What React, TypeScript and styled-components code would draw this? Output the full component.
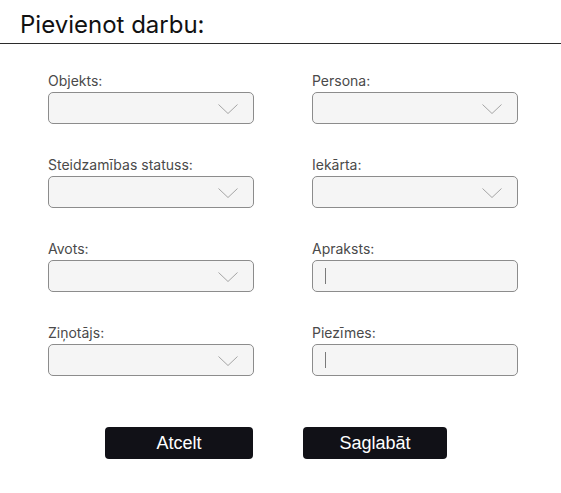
import React from 'react'
import styled, { createGlobalStyle } from 'styled-components'

const GlobalStyle = createGlobalStyle`
	html, body {
		margin: 0;
		padding: 0;
		background: #ffffff;
	}
	body {
		font-family: Inter, "Noto Sans", sans-serif;
	}
`

const Page = styled.div`
	width: 561px;
	min-height: 493px;
	background: #ffffff;
`

const Header = styled.div`
	padding: 10px 0 4px 20px;
	border-bottom: solid 1px #2b2b2b;
`

const Title = styled.h1`
	margin: 0;
	font-size: 24px;
	line-height: 29px;
	font-weight: 400;
	color: #111111;
`

const FormGrid = styled.div`
	display: grid;
	grid-template-columns: 206px 206px;
	column-gap: 58px;
	row-gap: 32px;
	padding: 28px 0 0 48px;
`

const Field = styled.div`
	display: flex;
	flex-direction: column;
	gap: 3px;
`

const Label = styled.label`
	font-size: 14px;
	line-height: 17px;
	font-weight: 400;
	color: #4a4a4a;
`

const Box = styled.div`
	position: relative;
	box-sizing: border-box;
	height: 32px;
	background: #f5f5f5;
	border: solid 1px #8c8c8c;
	border-radius: 5px;
	display: flex;
	align-items: center;
`

const Chevron = styled.svg`
	position: absolute;
	right: 15px;
	top: 11px;
`

const Caret = styled.span`
	display: block;
	width: 1px;
	height: 16px;
	margin-left: 12px;
	background: #7a7a7a;
`

const Actions = styled.div`
	display: flex;
	gap: 50px;
	padding: 51px 0 0 105px;
`

const Button = styled.button<{ w: number }>`
	width: ${({ w }) => w}px;
	height: 32px;
	border: none;
	border-radius: 4px;
	background: #111117;
	color: #ffffff;
	font-family: "Liberation Sans", Arial, sans-serif;
	font-size: 18px;
	font-weight: 400;
	padding: 0;
	cursor: pointer;
`

const SelectBox = () => (
	<Box>
		<Chevron width="20" height="10" viewBox="0 0 20 10">
			<path d="M0.5 0.5 L10 9.5 L19.5 0.5" fill="none" stroke="#8f8f8f" strokeWidth="0.8" />
		</Chevron>
	</Box>
)

const InputBox = () => (
	<Box>
		<Caret />
	</Box>
)

const fields = [
	{ label: 'Objekts:', kind: 'select' },
	{ label: 'Persona:', kind: 'select' },
	{ label: 'Steidzamības statuss:', kind: 'select' },
	{ label: 'Iekārta:', kind: 'select' },
	{ label: 'Avots:', kind: 'select' },
	{ label: 'Apraksts:', kind: 'input' },
	{ label: 'Ziņotājs:', kind: 'select' },
	{ label: 'Piezīmes:', kind: 'input' },
]

export default function App() {
	return (
		<>
			<GlobalStyle />
			<Page>
				<Header>
					<Title>Pievienot darbu:</Title>
				</Header>
				<FormGrid>
					{fields.map((f, k) => (
						<Field key={k}>
							<Label>{f.label}</Label>
							{f.kind === 'select' ? <SelectBox /> : <InputBox />}
						</Field>
					))}
				</FormGrid>
				<Actions>
					<Button w={148}>Atcelt</Button>
					<Button w={144}>Saglabāt</Button>
				</Actions>
			</Page>
		</>
	)
}
